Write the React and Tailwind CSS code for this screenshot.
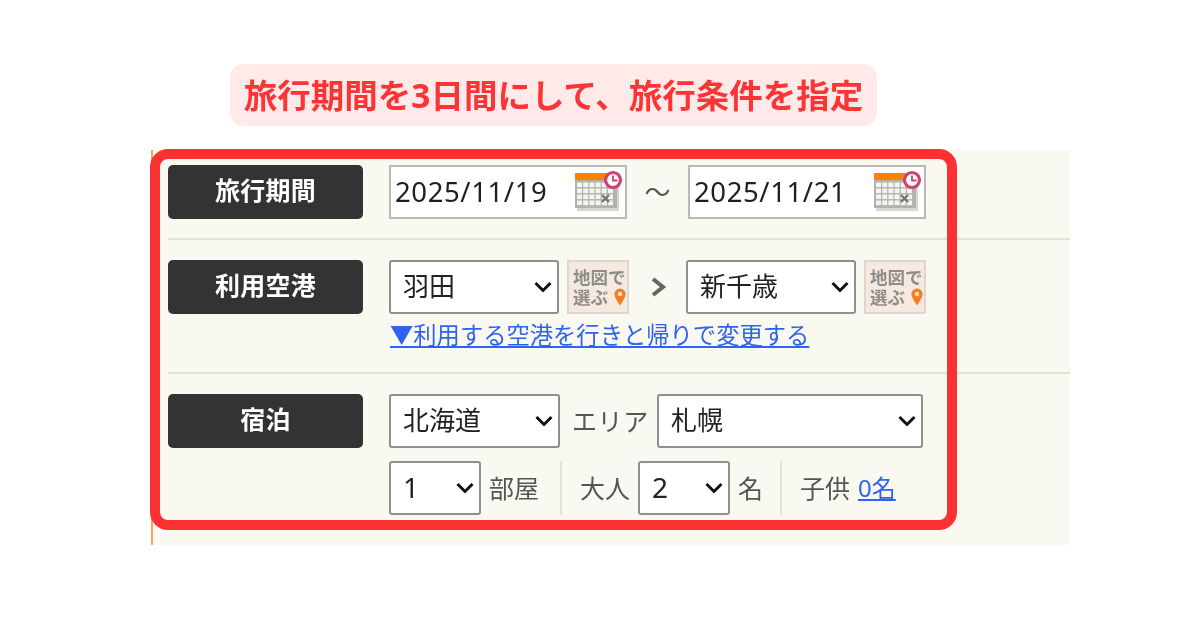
import React from "react";

const JP = "[font-family:'Noto_Sans','Noto_Sans_CJK_JP',sans-serif]";

function Calendar() {
  const cells = [];
  for (let r = 0; r < 4; r++) {
    for (let c = 0; c < 6; c++) {
      cells.push(<rect key={`${r}-${c}`} x={4 + c * 6.2} y={12.5 + r * 6} width="5" height="4.6" fill="#f4f4f2" />);
    }
  }
  return (
    <svg width="52" height="44" viewBox="0 0 52 44" className="shrink-0">
      <rect x="4" y="6" width="42" height="35" fill="#d8d6d0" />
      <rect x="2" y="3" width="42" height="35" fill="#b4b2ae" />
      <rect x="2" y="3" width="38" height="7" fill="#f88300" />
      {cells}
      <path d="M29 25l7 7M36 25l-7 7" stroke="#77756f" strokeWidth="2.4" />
      <circle cx="40" cy="10" r="7.5" fill="#fff" stroke="#d0416f" strokeWidth="3.2" />
      <path d="M40 5.5V10.5H44.5" fill="none" stroke="#d0416f" strokeWidth="1.8" />
    </svg>
  );
}

function DateField({ value }) {
  return (
    <div className="flex h-[54px] w-[238px] items-center border-2 border-[#b9b8b2] bg-white pl-[4px] pr-[0px]">
      <input
        readOnly
        value={value}
        className={`${JP} w-0 flex-1 bg-transparent text-[27.5px] tracking-[0.6px] text-[#1f1f1f] outline-none`}
      />
      <Calendar />
    </div>
  );
}

function Chevron() {
  return (
    <svg width="18" height="11" viewBox="0 0 18 11" className="pointer-events-none absolute right-[7px] top-1/2 -translate-y-1/2">
      <path d="M1.5 1.5L9 9l7.5-7.500" fill="none" stroke="#111" strokeWidth="3" />
    </svg>
  );
}

function Select({ value, widthClass, sizeClass = "text-[26px]" }) {
  return (
    <div className={`relative h-[54px] shrink-0 ${widthClass}`}>
      <select
        defaultValue={value}
        className={`${JP} h-full w-full appearance-none rounded-[3px] border-2 border-[#8f8f8c] bg-white pl-[12px] pb-[2px] ${sizeClass} text-[#222] outline-none`}
      >
        <option>{value}</option>
      </select>
      <Chevron />
    </div>
  );
}

function MapButton() {
  return (
    <div className="relative flex h-[54px] w-[62px] shrink-0 items-center border-2 border-[#ddd8cf] bg-[#f5e9e0] pl-[4px]">
      <div className={`${JP} whitespace-pre-line text-[17.5px] font-bold leading-[20px] text-[#8d8d8a]`}>{"地図で\n選ぶ"}</div>
      <svg width="12" height="18" viewBox="0 0 12 18" className="absolute bottom-[6px] right-[1px]">
        <path d="M6 .5a5.600 5.600 0 0 1 5.600 5.600c0 4-5.600 11.400-5.600 11.400S.4 10.100.4 6.100A5.600 5.600 0 0 1 6 .5z" fill="#f57c20" />
        <circle cx="6" cy="6" r="2.200" fill="#fbe6d2" />
      </svg>
    </div>
  );
}

function Label({ children }) {
  return (
    <div className={`${JP} flex h-[54px] w-[195px] shrink-0 items-center justify-center rounded-[5px] bg-[#333333] pb-[2px] text-[25px] font-bold tracking-[0.2px] text-white`}>
      {children}
    </div>
  );
}

function Muted({ children, className = "" }) {
  return <span className={`${JP} shrink-0 text-[25px] leading-none text-[#555] ${className}`}>{children}</span>;
}

export default function App() {
  return (
    <div className="relative h-[630px] w-[1200px] overflow-hidden bg-white pt-[64px] blur-[0.35px]">
      <div className={`${JP} ml-[230px] flex h-[62px] w-[647px] items-center justify-center rounded-[14px] bg-[#ffe9e9] text-[33.5px] font-bold text-[#fb3535]`}>
        旅行期間を3日間にして、旅行条件を指定
      </div>

      <div className="relative ml-[151px] mt-[24px] h-[395px] w-[919px] border-l-2 border-[#f2a65a] bg-[#faf9f1] pl-[15px]">
        <div className="flex h-[90px] gap-[26px] border-b-2 border-[#e3e1cf] pt-[15px]">
          <Label>旅行期間</Label>
          <div className="flex items-start">
            <DateField value="2025/11/19" />
            <span className={`${JP} w-[61px] text-center text-[26px] leading-[54px] text-[#555]`}>～</span>
            <DateField value="2025/11/21" />
          </div>
        </div>

        <div className="flex h-[134px] gap-[26px] border-b-2 border-[#e3e1cf] pt-[20px]">
          <Label>利用空港</Label>
          <div className="flex flex-col items-start">
            <div className="flex items-center">
              <Select value="羽田" widthClass="w-[170px]" />
              <div className="ml-[8px]">
                <MapButton />
              </div>
              <svg width="57" height="20" viewBox="0 0 57 20" className="shrink-0">
                <path d="M24 2l10 8-10 8" fill="none" stroke="#666" strokeWidth="4" />
              </svg>
              <Select value="新千歳" widthClass="w-[170px]" />
              <div className="ml-[8px]">
                <MapButton />
              </div>
            </div>
            <a href="#" className={`${JP} ml-[1px] mt-[6px] text-[23.3px] leading-[30px] text-[#2f62f0] underline`}>
              ▼利用する空港を行きと帰りで変更する
            </a>
          </div>
        </div>

        <div className="flex gap-[26px] pt-[20px]">
          <Label>宿泊</Label>
          <div className="flex flex-col gap-[13px]">
            <div className="flex items-center">
              <Select value="北海道" widthClass="w-[171px]" />
              <Muted className="ml-[12px] mr-[8px] w-[77px] tracking-[0.6px]">エリア</Muted>
              <Select value="札幌" widthClass="w-[266px]" />
            </div>
            <div className="flex items-center">
              <Select value="1" widthClass="w-[92px]" sizeClass="text-[28px]" />
              <Muted className="ml-[8px]">部屋</Muted>
              <div className="ml-[21px] mr-[18px] h-[54px] w-[2px] bg-[#e3e1cf]" />
              <Muted>大人</Muted>
              <div className="ml-[8px]">
                <Select value="2" widthClass="w-[92px]" sizeClass="text-[28px]" />
              </div>
              <Muted className="ml-[8px]">名</Muted>
              <div className="ml-[17px] mr-[18px] h-[54px] w-[2px] bg-[#e3e1cf]" />
              <Muted>子供</Muted>
              <a href="#" className={`${JP} ml-[8px] text-[24px] leading-none text-[#2f62f0] underline`}>
                0名
              </a>
            </div>
          </div>
        </div>
      </div>

      <div className="pointer-events-none absolute left-[150px] top-[149px] h-[381px] w-[807px] rounded-[18px] border-[10px] border-[#fb3030]" />
    </div>
  );
}
